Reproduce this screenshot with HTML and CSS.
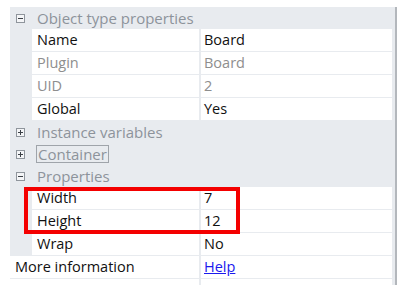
FILE: index.html
```html
<!DOCTYPE html>
<html>
<head>
<meta charset="utf-8">
<link rel="stylesheet" href="styles.css">
</head>
<body>
<div class="grid">
  <div class="hdr"><span class="tog minus"></span><span class="htxt">Object type properties</span></div>
  <div class="row"><div class="k">Name</div><div class="v">Board</div></div>
  <div class="row dis"><div class="k">Plugin</div><div class="v">Board</div></div>
  <div class="row dis"><div class="k">UID</div><div class="v">2</div></div>
  <div class="row"><div class="k">Global</div><div class="v">Yes</div></div>
  <div class="hdr"><span class="tog plus"></span><span class="htxt">Instance variables</span></div>
  <div class="hdr"><span class="tog plus"></span><span class="htxt focus">Container</span></div>
  <div class="hdr"><span class="tog minus"></span><span class="htxt">Properties</span></div>
  <div class="mark">
    <div class="row"><div class="k">Width</div><div class="v">7</div></div>
    <div class="row"><div class="k">Height</div><div class="v">12</div></div>
    <div class="redbox"></div>
  </div>
  <div class="row"><div class="k">Wrap</div><div class="v">No</div></div>
  <div class="row top"><div class="k">More information</div><div class="v"><a href="#" class="link">Help</a></div></div>
  <div class="row top filler"><div class="k"></div><div class="v"></div></div>
</div>
</body>
</html>
```
FILE: styles.css
```css
* { box-sizing: border-box; }
body {
  margin: 0;
  background: #fff;
  font-family: "Open Sans", "Noto Sans", sans-serif;
  font-size: 14.5px;
  color: #111;
}
.grid {
  margin: 7px 0 0 10px;
  width: 387px;
  background: #e8ebef;
  border-right: 2px solid #b3b7bc;
  padding-right: 3px;
}
.hdr {
  height: 22px;
  display: flex;
  align-items: center;
  color: #8d939b;
  font-size: 15px;
}
.tog {
  width: 9px;
  height: 9px;
  border: 1px solid #8f959c;
  margin: 0 12px 0 6px;
  position: relative;
  background: #f4f5f7;
  flex: none;
}
.tog::before {
  content: "";
  position: absolute;
  left: 1px; top: 3px;
  width: 5px; height: 1px;
  background: #3b4046;
}
.tog.plus::after {
  content: "";
  position: absolute;
  left: 3px; top: 1px;
  width: 1px; height: 5px;
  background: #3b4046;
}
.htxt { line-height: 18px; padding: 0 1px; margin-left: -1px; }
.focus { border: 1px solid #9fa4aa; padding: 0 1px 0 1px; line-height: 16px; }
.row {
  height: 23px;
  display: flex;
  margin-left: 22px;
  border-bottom: 1px solid #e8ebef;
}
.row.top { margin-left: 0; }
.k {
  width: 169px;
  background: #fff;
  padding-left: 5px;
  line-height: 21px;
  border-right: 2px solid #e8ebef;
  flex: none;
}
.row.top .k { width: 191px; }
.v {
  flex: 1;
  background: #fff;
  padding-left: 3px;
  line-height: 21px;
}
.dis { color: #8e8e8e; }
.link { color: #1a1aee; text-decoration: underline; }
.filler { height: 6px; border-bottom: none; }
.mark { position: relative; }
.redbox {
  position: absolute;
  left: 14px;
  top: 0;
  width: 216px;
  height: 47px;
  border: 4px solid #f40000;
}
```
